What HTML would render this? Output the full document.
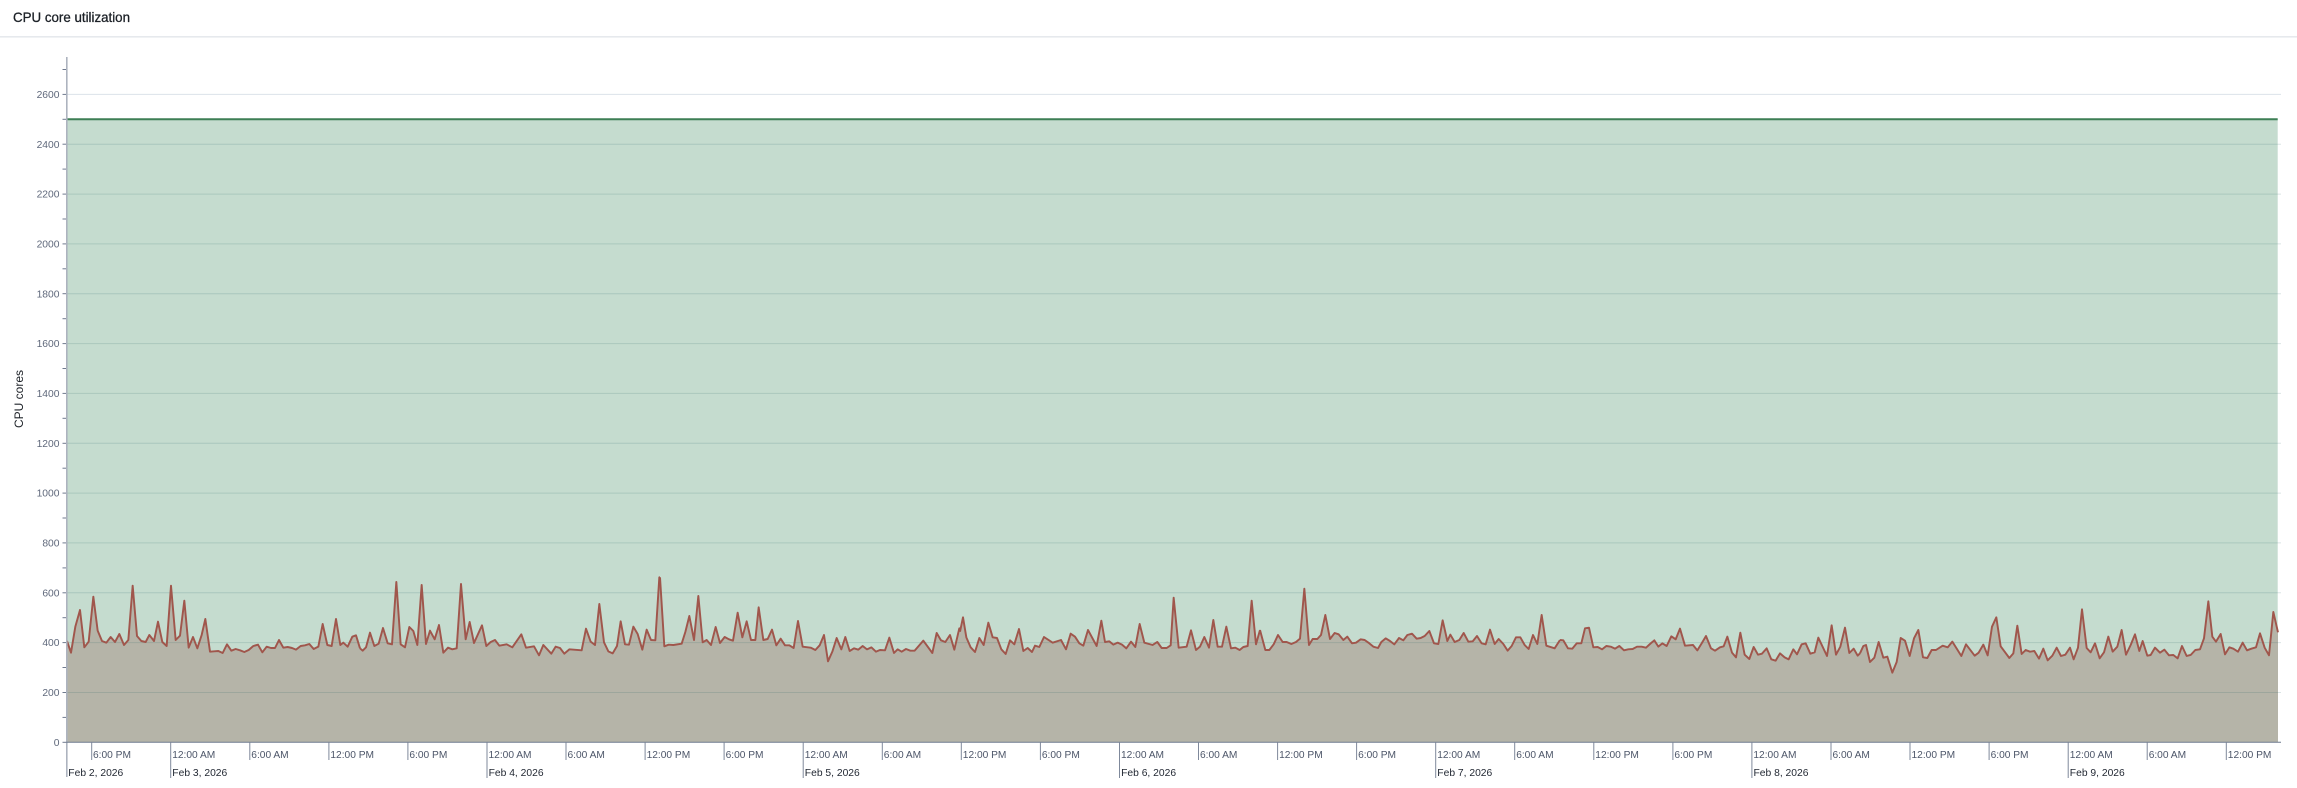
<!DOCTYPE html>
<html lang="en">
<head>
<meta charset="utf-8">
<title>CPU core utilization</title>
<style>
html,body{margin:0;padding:0;background:#fff;width:2297px;height:788px;overflow:hidden}
svg{display:block}
text{font-family:"Liberation Sans",sans-serif}
.y{font-size:10.3px;fill:#5f687b;text-anchor:end}
.h{font-size:10.2px;fill:#4d5669}
.d{font-size:10.3px;fill:#1f2530}
.f polygon{fill:#b5b4a8;stroke:none}
.s polyline{fill:none;stroke:#a0564c;stroke-width:5.8;stroke-linejoin:round;stroke-linecap:butt}
</style>
</head>
<body>
<svg width="2297" height="788" viewBox="0 0 2297 788" xmlns="http://www.w3.org/2000/svg">
<text x="13" y="22" font-size="14" fill="#1c2127" stroke="#1c2127" stroke-width=".3" textLength="117" lengthAdjust="spacingAndGlyphs">CPU core utilization</text>
<rect x="0" y="36" width="2297" height="1.6" fill="#e6e9ed"/>
<text transform="translate(23,428) rotate(-90)" font-size="12" fill="#1c2127" textLength="58" lengthAdjust="spacingAndGlyphs">CPU cores</text>

<!-- green capacity area -->
<rect x="67" y="119.3" width="2210.7" height="623" fill="#c5dccf"/>

<!-- brown area -->
<g class="f">
<g transform="translate(60,560) scale(.33333)"><polygon points="21,243 33,278 46,200 60,150 73,262 86,245 100,110 113,212 126,243 139,248 152,231 165,246 178,222 192,255 205,240 218,77 231,228 244,243 257,246 268,225 282,243 294,185 307,246 320,258 333,77 347,240 360,227 373,122 386,263 399,231 412,265 425,225 436,177 450,275 463,274 475,273 488,279 501,253 514,272 527,267 540,271 553,276 566,270 580,258 594,254 607,277 620,260 633,264 645,264 657,240 670,263 683,261 696,264 708,269 722,258 735,256 748,252 761,267 775,260 788,192 802,255 815,258 828,177 841,255 850,248 863,260 877,230 888,226 900,265 900,547 21,547"/></g>
<g transform="translate(360,560) scale(.33333)"><polygon points="0,265 8,272 18,262 30,218 43,258 56,251 69,204 83,250 96,253 109,66 122,253 135,262 148,201 160,213 172,255 185,75 198,252 210,212 224,238 237,195 250,278 264,263 277,268 290,265 303,72 317,238 329,186 342,249 366,196 379,258 392,246 405,240 418,257 440,253 457,262 484,223 498,263 522,259 537,286 550,255 574,281 587,260 600,264 613,281 628,268 665,271 678,206 692,245 705,255 718,132 732,247 745,274 758,280 771,258 782,184 795,253 807,254 820,200 833,222 847,269 860,209 873,240 886,241 898,52 900,52 900,547 0,547"/></g>
<g transform="translate(660,560) scale(.33333)"><polygon points="0,52 13,259 26,254 40,255 65,251 76,216 88,168 102,240 115,108 128,247 140,240 153,255 167,201 180,249 194,231 207,238 219,242 233,158 247,232 260,184 273,240 286,240 296,142 310,240 323,237 336,209 349,256 362,236 375,256 388,256 401,264 414,183 428,260 452,263 466,270 479,256 492,225 504,304 517,275 530,234 544,268 556,231 569,273 582,265 595,269 608,258 621,268 634,262 648,275 660,270 675,271 688,233 702,279 713,268 725,275 738,267 751,272 764,272 790,242 817,279 830,219 843,241 856,246 870,225 883,269 898,205 900,215 900,547 0,547"/></g>
<g transform="translate(960,560) scale(.33333)"><polygon points="0,215 9,172 19,232 32,262 45,276 58,234 71,255 85,188 98,232 111,234 124,268 137,282 150,241 163,253 177,207 190,273 203,264 216,276 225,257 238,261 252,231 278,248 303,240 318,268 332,221 345,230 358,250 370,257 384,210 410,258 424,182 435,246 448,244 460,254 473,248 486,254 499,265 513,245 526,261 539,192 553,248 578,255 592,246 605,264 620,264 632,256 641,113 656,263 680,260 693,211 708,270 720,260 733,231 747,263 760,180 773,260 786,260 799,200 813,265 826,263 839,270 850,261 863,258 875,122 888,253 900,210 900,547 0,547"/></g>
<g transform="translate(1260,560) scale(.33333)"><polygon points="0,210 16,270 28,270 41,253 54,225 68,246 80,246 94,252 108,246 120,236 133,86 147,255 158,237 172,237 183,225 196,165 210,237 224,219 236,223 250,240 262,230 276,250 288,248 302,238 314,240 328,250 340,260 354,264 364,246 377,235 390,243 403,253 417,234 430,241 442,225 456,221 470,236 482,234 494,228 508,213 522,250 535,252 548,181 562,243 571,224 584,246 598,240 611,219 625,245 638,244 651,228 665,250 677,253 690,209 704,252 716,237 730,252 743,272 755,258 768,232 781,232 794,255 806,267 819,225 832,252 845,165 859,257 884,265 900,240 900,547 0,547"/></g>
<g transform="translate(1560,560) scale(.33333)"><polygon points="0,240 10,241 24,265 37,266 50,250 64,250 75,205 87,203 100,262 113,261 126,268 139,258 152,260 165,266 178,258 192,271 205,268 218,267 231,260 245,260 258,263 270,252 283,241 295,260 307,250 320,258 334,229 347,238 360,206 375,257 399,255 412,271 425,250 438,228 453,265 465,272 480,262 491,259 502,230 516,278 528,292 541,218 554,284 568,297 581,261 594,284 606,281 620,265 634,298 647,302 660,280 674,292 686,298 700,268 711,283 725,253 737,250 751,281 764,277 775,233 801,288 815,196 828,284 841,260 855,203 868,279 881,266 893,287 900,280 900,547 0,547"/></g>
<g transform="translate(1860,600) scale(.33333)"><polygon points="0,160 10,138 18,135 30,186 43,173 56,126 70,173 82,170 97,218 110,186 122,114 135,122 149,168 162,115 175,90 189,172 202,174 215,150 228,150 248,137 263,142 277,125 304,168 318,133 344,167 356,158 370,134 383,166 396,80 409,52 422,139 448,174 460,160 472,77 485,162 497,150 510,155 523,153 537,176 550,146 563,181 577,167 590,143 603,168 616,164 630,143 641,178 654,143 666,28 680,144 692,157 705,130 719,175 732,157 745,110 758,155 772,140 785,90 798,164 812,135 825,103 838,153 848,123 862,167 872,165 885,143 900,158 913,149 927,166 940,165 953,175 966,138 980,168 992,165 1006,150 1020,148 1032,115 1045,4 1057,110 1068,125 1082,102 1095,163 1108,142 1120,146 1134,155 1148,128 1161,151 1174,146 1188,142 1200,100 1214,143 1227,166 1240,36 1254,97 1254,427 0,427"/></g>
</g>

<!-- grid -->
<g stroke="rgba(40,100,100,.17)" stroke-width="1">
<line x1="67" x2="2281" y1="692.5" y2="692.5"/>
<line x1="67" x2="2281" y1="642.6" y2="642.6"/>
<line x1="67" x2="2281" y1="592.8" y2="592.8"/>
<line x1="67" x2="2281" y1="542.9" y2="542.9"/>
<line x1="67" x2="2281" y1="493.1" y2="493.1"/>
<line x1="67" x2="2281" y1="443.3" y2="443.3"/>
<line x1="67" x2="2281" y1="393.4" y2="393.4"/>
<line x1="67" x2="2281" y1="343.6" y2="343.6"/>
<line x1="67" x2="2281" y1="293.7" y2="293.7"/>
<line x1="67" x2="2281" y1="243.9" y2="243.9"/>
<line x1="67" x2="2281" y1="194.1" y2="194.1"/>
<line x1="67" x2="2281" y1="144.2" y2="144.2"/>
</g>
<line x1="67" x2="2281" y1="94.4" y2="94.4" stroke="#dbe2ea" stroke-width="1"/>

<!-- capacity line -->
<line x1="67" x2="2277.7" y1="119.3" y2="119.3" stroke="#3d7f55" stroke-width="2"/>

<!-- utilization line -->
<g class="s">
<g transform="translate(60,560) scale(.33333)"><polyline points="21,243 33,278 46,200 60,150 73,262 86,245 100,110 113,212 126,243 139,248 152,231 165,246 178,222 192,255 205,240 218,77 231,228 244,243 257,246 268,225 282,243 294,185 307,246 320,258 333,77 347,240 360,227 373,122 386,263 399,231 412,265 425,225 436,177 450,275 463,274 475,273 488,279 501,253 514,272 527,267 540,271 553,276 566,270 580,258 594,254 607,277 620,260 633,264 645,264 657,240 670,263 683,261 696,264 708,269 722,258 735,256 748,252 761,267 775,260 788,192 802,255 815,258 828,177 841,255 850,248 863,260 877,230 888,226 900,265"/></g>
<g transform="translate(360,560) scale(.33333)"><polyline points="0,265 8,272 18,262 30,218 43,258 56,251 69,204 83,250 96,253 109,66 122,253 135,262 148,201 160,213 172,255 185,75 198,252 210,212 224,238 237,195 250,278 264,263 277,268 290,265 303,72 317,238 329,186 342,249 366,196 379,258 392,246 405,240 418,257 440,253 457,262 484,223 498,263 522,259 537,286 550,255 574,281 587,260 600,264 613,281 628,268 665,271 678,206 692,245 705,255 718,132 732,247 745,274 758,280 771,258 782,184 795,253 807,254 820,200 833,222 847,269 860,209 873,240 886,241 898,52 900,52"/></g>
<g transform="translate(660,560) scale(.33333)"><polyline points="0,52 13,259 26,254 40,255 65,251 76,216 88,168 102,240 115,108 128,247 140,240 153,255 167,201 180,249 194,231 207,238 219,242 233,158 247,232 260,184 273,240 286,240 296,142 310,240 323,237 336,209 349,256 362,236 375,256 388,256 401,264 414,183 428,260 452,263 466,270 479,256 492,225 504,304 517,275 530,234 544,268 556,231 569,273 582,265 595,269 608,258 621,268 634,262 648,275 660,270 675,271 688,233 702,279 713,268 725,275 738,267 751,272 764,272 790,242 817,279 830,219 843,241 856,246 870,225 883,269 898,205 900,215"/></g>
<g transform="translate(960,560) scale(.33333)"><polyline points="0,215 9,172 19,232 32,262 45,276 58,234 71,255 85,188 98,232 111,234 124,268 137,282 150,241 163,253 177,207 190,273 203,264 216,276 225,257 238,261 252,231 278,248 303,240 318,268 332,221 345,230 358,250 370,257 384,210 410,258 424,182 435,246 448,244 460,254 473,248 486,254 499,265 513,245 526,261 539,192 553,248 578,255 592,246 605,264 620,264 632,256 641,113 656,263 680,260 693,211 708,270 720,260 733,231 747,263 760,180 773,260 786,260 799,200 813,265 826,263 839,270 850,261 863,258 875,122 888,253 900,210"/></g>
<g transform="translate(1260,560) scale(.33333)"><polyline points="0,210 16,270 28,270 41,253 54,225 68,246 80,246 94,252 108,246 120,236 133,86 147,255 158,237 172,237 183,225 196,165 210,237 224,219 236,223 250,240 262,230 276,250 288,248 302,238 314,240 328,250 340,260 354,264 364,246 377,235 390,243 403,253 417,234 430,241 442,225 456,221 470,236 482,234 494,228 508,213 522,250 535,252 548,181 562,243 571,224 584,246 598,240 611,219 625,245 638,244 651,228 665,250 677,253 690,209 704,252 716,237 730,252 743,272 755,258 768,232 781,232 794,255 806,267 819,225 832,252 845,165 859,257 884,265 900,240"/></g>
<g transform="translate(1560,560) scale(.33333)"><polyline points="0,240 10,241 24,265 37,266 50,250 64,250 75,205 87,203 100,262 113,261 126,268 139,258 152,260 165,266 178,258 192,271 205,268 218,267 231,260 245,260 258,263 270,252 283,241 295,260 307,250 320,258 334,229 347,238 360,206 375,257 399,255 412,271 425,250 438,228 453,265 465,272 480,262 491,259 502,230 516,278 528,292 541,218 554,284 568,297 581,261 594,284 606,281 620,265 634,298 647,302 660,280 674,292 686,298 700,268 711,283 725,253 737,250 751,281 764,277 775,233 801,288 815,196 828,284 841,260 855,203 868,279 881,266 893,287 900,280"/></g>
<g transform="translate(1860,600) scale(.33333)"><polyline points="0,160 10,138 18,135 30,186 43,173 56,126 70,173 82,170 97,218 110,186 122,114 135,122 149,168 162,115 175,90 189,172 202,174 215,150 228,150 248,137 263,142 277,125 304,168 318,133 344,167 356,158 370,134 383,166 396,80 409,52 422,139 448,174 460,160 472,77 485,162 497,150 510,155 523,153 537,176 550,146 563,181 577,167 590,143 603,168 616,164 630,143 641,178 654,143 666,28 680,144 692,157 705,130 719,175 732,157 745,110 758,155 772,140 785,90 798,164 812,135 825,103 838,153 848,123 862,167 872,165 885,143 900,158 913,149 927,166 940,165 953,175 966,138 980,168 992,165 1006,150 1020,148 1032,115 1045,4 1057,110 1068,125 1082,102 1095,163 1108,142 1120,146 1134,155 1148,128 1161,151 1174,146 1188,142 1200,100 1214,143 1227,166 1240,36 1254,97"/></g>
</g>

<!-- axes -->
<rect x="66" y="57" width="1.6" height="720" fill="#adb3bf"/>
<g stroke="#6f7a8e" stroke-width="1">
<line x1="66" x2="2281" y1="742.3" y2="742.3"/>
<line x1="62.5" x2="66" y1="742.3" y2="742.3"/>
<line x1="62.5" x2="66" y1="717.4" y2="717.4"/>
<line x1="62.5" x2="66" y1="692.5" y2="692.5"/>
<line x1="62.5" x2="66" y1="667.5" y2="667.5"/>
<line x1="62.5" x2="66" y1="642.6" y2="642.6"/>
<line x1="62.5" x2="66" y1="617.7" y2="617.7"/>
<line x1="62.5" x2="66" y1="592.8" y2="592.8"/>
<line x1="62.5" x2="66" y1="567.9" y2="567.9"/>
<line x1="62.5" x2="66" y1="542.9" y2="542.9"/>
<line x1="62.5" x2="66" y1="518" y2="518"/>
<line x1="62.5" x2="66" y1="493.1" y2="493.1"/>
<line x1="62.5" x2="66" y1="468.2" y2="468.2"/>
<line x1="62.5" x2="66" y1="443.3" y2="443.3"/>
<line x1="62.5" x2="66" y1="418.3" y2="418.3"/>
<line x1="62.5" x2="66" y1="393.4" y2="393.4"/>
<line x1="62.5" x2="66" y1="368.5" y2="368.5"/>
<line x1="62.5" x2="66" y1="343.6" y2="343.6"/>
<line x1="62.5" x2="66" y1="318.7" y2="318.7"/>
<line x1="62.5" x2="66" y1="293.7" y2="293.7"/>
<line x1="62.5" x2="66" y1="268.8" y2="268.8"/>
<line x1="62.5" x2="66" y1="243.9" y2="243.9"/>
<line x1="62.5" x2="66" y1="219" y2="219"/>
<line x1="62.5" x2="66" y1="194.1" y2="194.1"/>
<line x1="62.5" x2="66" y1="169.1" y2="169.1"/>
<line x1="62.5" x2="66" y1="144.2" y2="144.2"/>
<line x1="62.5" x2="66" y1="119.3" y2="119.3"/>
<line x1="62.5" x2="66" y1="94.4" y2="94.4"/>
<line x1="62.5" x2="66" y1="69.5" y2="69.5"/>
</g>

<!-- y labels -->
<text class="y" x="59.5" y="746">0</text>
<text class="y" x="59.5" y="696.1">200</text>
<text class="y" x="59.5" y="646.2">400</text>
<text class="y" x="59.5" y="596.4">600</text>
<text class="y" x="59.5" y="546.5">800</text>
<text class="y" x="59.5" y="496.7">1000</text>
<text class="y" x="59.5" y="446.9">1200</text>
<text class="y" x="59.5" y="397">1400</text>
<text class="y" x="59.5" y="347.2">1600</text>
<text class="y" x="59.5" y="297.3">1800</text>
<text class="y" x="59.5" y="247.5">2000</text>
<text class="y" x="59.5" y="197.7">2200</text>
<text class="y" x="59.5" y="147.8">2400</text>
<text class="y" x="59.5" y="98">2600</text>

<!-- x hour ticks -->
<g stroke="#7f899b" stroke-width="1">
<line x1="91.7" x2="91.7" y1="742.3" y2="760"/>
<line x1="249.8" x2="249.8" y1="742.3" y2="760"/>
<line x1="328.9" x2="328.9" y1="742.3" y2="760"/>
<line x1="407.9" x2="407.9" y1="742.3" y2="760"/>
<line x1="566" x2="566" y1="742.3" y2="760"/>
<line x1="645.1" x2="645.1" y1="742.3" y2="760"/>
<line x1="724.1" x2="724.1" y1="742.3" y2="760"/>
<line x1="882.3" x2="882.3" y1="742.3" y2="760"/>
<line x1="961.3" x2="961.3" y1="742.3" y2="760"/>
<line x1="1040.4" x2="1040.4" y1="742.3" y2="760"/>
<line x1="1198.5" x2="1198.5" y1="742.3" y2="760"/>
<line x1="1277.6" x2="1277.6" y1="742.3" y2="760"/>
<line x1="1356.6" x2="1356.6" y1="742.3" y2="760"/>
<line x1="1514.7" x2="1514.7" y1="742.3" y2="760"/>
<line x1="1593.8" x2="1593.8" y1="742.3" y2="760"/>
<line x1="1672.9" x2="1672.9" y1="742.3" y2="760"/>
<line x1="1831" x2="1831" y1="742.3" y2="760"/>
<line x1="1910" x2="1910" y1="742.3" y2="760"/>
<line x1="1989.1" x2="1989.1" y1="742.3" y2="760"/>
<line x1="2147.2" x2="2147.2" y1="742.3" y2="760"/>
<line x1="2226.3" x2="2226.3" y1="742.3" y2="760"/>
<!-- day ticks -->
<line x1="170.7" x2="170.7" y1="742.3" y2="778"/>
<line x1="487" x2="487" y1="742.3" y2="778"/>
<line x1="803.2" x2="803.2" y1="742.3" y2="778"/>
<line x1="1119.5" x2="1119.5" y1="742.3" y2="778"/>
<line x1="1435.7" x2="1435.7" y1="742.3" y2="778"/>
<line x1="1751.9" x2="1751.9" y1="742.3" y2="778"/>
<line x1="2068.2" x2="2068.2" y1="742.3" y2="778"/>
</g>

<!-- x labels -->
<text class="h" x="93" y="758">6:00 PM</text>
<text class="h" x="172.2" y="758">12:00 AM</text>
<text class="h" x="251.3" y="758">6:00 AM</text>
<text class="h" x="330.4" y="758">12:00 PM</text>
<text class="h" x="409.4" y="758">6:00 PM</text>
<text class="h" x="488.5" y="758">12:00 AM</text>
<text class="h" x="567.5" y="758">6:00 AM</text>
<text class="h" x="646.6" y="758">12:00 PM</text>
<text class="h" x="725.6" y="758">6:00 PM</text>
<text class="h" x="804.7" y="758">12:00 AM</text>
<text class="h" x="883.8" y="758">6:00 AM</text>
<text class="h" x="962.8" y="758">12:00 PM</text>
<text class="h" x="1041.9" y="758">6:00 PM</text>
<text class="h" x="1121" y="758">12:00 AM</text>
<text class="h" x="1200" y="758">6:00 AM</text>
<text class="h" x="1279.1" y="758">12:00 PM</text>
<text class="h" x="1358.1" y="758">6:00 PM</text>
<text class="h" x="1437.2" y="758">12:00 AM</text>
<text class="h" x="1516.2" y="758">6:00 AM</text>
<text class="h" x="1595.3" y="758">12:00 PM</text>
<text class="h" x="1674.4" y="758">6:00 PM</text>
<text class="h" x="1753.4" y="758">12:00 AM</text>
<text class="h" x="1832.5" y="758">6:00 AM</text>
<text class="h" x="1911.5" y="758">12:00 PM</text>
<text class="h" x="1990.6" y="758">6:00 PM</text>
<text class="h" x="2069.7" y="758">12:00 AM</text>
<text class="h" x="2148.7" y="758">6:00 AM</text>
<text class="h" x="2227.8" y="758">12:00 PM</text>

<text class="d" x="68.3" y="776">Feb 2, 2026</text>
<text class="d" x="172.3" y="776">Feb 3, 2026</text>
<text class="d" x="488.6" y="776">Feb 4, 2026</text>
<text class="d" x="804.8" y="776">Feb 5, 2026</text>
<text class="d" x="1121.1" y="776">Feb 6, 2026</text>
<text class="d" x="1437.3" y="776">Feb 7, 2026</text>
<text class="d" x="1753.5" y="776">Feb 8, 2026</text>
<text class="d" x="2069.8" y="776">Feb 9, 2026</text>
</svg>
</body>
</html>
